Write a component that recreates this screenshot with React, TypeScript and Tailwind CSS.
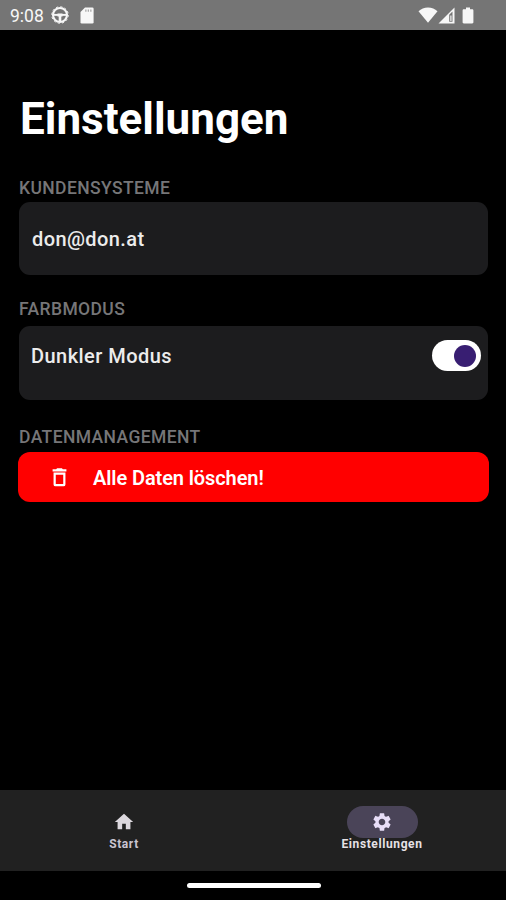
import type { ReactNode } from 'react'
import { MdHome, MdSettings } from 'react-icons/md'

function WheelIcon() {
  return (
    <svg viewBox="0 0 18 18" className="w-[18px] h-[18px]" fill="none" stroke="currentColor">
      <circle cx="9" cy="9" r="7" strokeWidth="2.1" />
      <circle cx="9" cy="9" r="8.3" strokeWidth=".9" strokeDasharray="2.2 2.15" />
      <path d="M2.500 8.900h13" strokeWidth="1.900" />
      <path d="M6.500 7.400h5v3h-1.200v4.600H7.700v-4.600H6.500z" fill="currentColor" stroke="none" />
    </svg>
  )
}

function TrashIcon() {
  return (
    <svg viewBox="0 0 24 24" className="size-[23px]" fill="currentColor">
      <path
        fillRule="evenodd"
        d="M4.800 3.500h3.700l1-1.100h5l1 1.100h3.700v2.300H4.800zM5.800 6.800h12.400v12.400a2 2 0 0 1-2 2H7.800a2 2 0 0 1-2-2zM8.100 9.100v9.800h7.800V9.100z"
      />
    </svg>
  )
}

function StatusBar() {
  return (
    <div className="h-[30px] bg-[#757575] flex items-center justify-between pl-[10px] pr-[32px] text-[#f7f7f7]">
      <div className="flex items-center">
        <span className="w-[41px] text-[17.5px] leading-[30px] pt-[2px]">9:08</span>
        <WheelIcon />
        <svg viewBox="0 0 14 17" className="w-[14px] h-[17px] ml-[11px]" fill="currentColor">
          <path d="M5 .5h7.300A1.300 1.300 0 0 1 13.600 1.800v13.400a1.300 1.300 0 0 1-1.300 1.300H1.800A1.300 1.300 0 0 1 .5 15.200V5z" />
          <path d="M5.200 2.500h1.300v2.300H5.200zM7.700 2.500H9v2.300H7.700zM10.200 2.500h1.300v2.300h-1.300z" fill="#aaa" />
        </svg>
      </div>
      <div className="flex items-center">
        <svg viewBox="0 0 20 16" className="w-5 h-4" fill="currentColor">
          <path d="M10 15.800.5 4.300C3 1.800 6.200.5 10 .5s7 1.300 9.500 3.800z" />
        </svg>
        <svg viewBox="0 0 17 17" className="w-[17px] h-[17px]" fill="currentColor">
          <path fillRule="evenodd" d="M.5 16.500 16.500.5v16zM11.200 7.800v6.900h3.300V4.500z" />
          <path d="M12.300 8.500h1.200v5.500h-1.200z" />
        </svg>
        <svg viewBox="0 0 12 17" className="w-3 h-[17px] ml-[7px]" fill="currentColor">
          <path d="M4 .5h4v1.700h2.200c.7 0 1.200.5 1.200 1.200v11.900c0 .7-.5 1.200-1.200 1.200H1.800c-.7 0-1.200-.5-1.200-1.200V3.400c0-.7.5-1.200 1.200-1.200H4z" />
        </svg>
      </div>
    </div>
  )
}

function SectionLabel({ children }: { children: ReactNode }) {
  return <h2 className="h-6 text-[17.5px] leading-6 tracking-[0.4px] font-medium text-[#767678]">{children}</h2>
}

function NavItem({ icon, label, active }: { icon: ReactNode; label: string; active?: boolean }) {
  return (
    <div className="flex-1 flex flex-col items-center pt-4">
      <div
        className={`w-[71px] h-8 rounded-full flex items-center justify-center text-[22px] ${
          active ? 'bg-[#4a4458] text-[#e8def8]' : 'text-[#dcd8de]'
        }`}
      >
        {icon}
      </div>
      <span className={`text-[12px] leading-3 font-bold tracking-[0.6px] ${active ? 'text-[#e6e1e5]' : 'text-[#cac4d0]'}`}>
        {label}
      </span>
    </div>
  )
}

export default function App() {
  return (
    <div className="w-[506px] h-[900px] bg-black flex flex-col overflow-hidden font-['Roboto',sans-serif]">
      <StatusBar />

      <main className="flex-1 pl-[19px] pr-[18px] pt-[63px]">
        <h1 className="h-[51px] pl-px text-[44px] leading-[52px] font-bold text-white">Einstellungen</h1>

        <section className="mt-8">
          <SectionLabel>KUNDENSYSTEME</SectionLabel>
          <div className="mt-[2px] h-[73px] rounded-[11px] bg-[#1c1c1e] flex items-center pl-[13px] text-[20px] font-medium tracking-[0.4px] text-[#ececec]">
            <span className="pt-px">don@don.at</span>
          </div>
        </section>

        <section className="mt-[22px]">
          <SectionLabel>FARBMODUS</SectionLabel>
          <div className="mt-[5px] h-[74px] rounded-[11px] bg-[#1c1c1e] flex items-start justify-between pl-3 pr-[7px] pt-[14px] text-[20px] font-medium tracking-[0.45px] text-[#ececec]">
            <span className="leading-8">Dunkler Modus</span>
            <div className="w-[49px] h-[31px] rounded-full bg-white flex items-center justify-end pr-[5px]">
              <div className="size-[22px] rounded-full bg-[#381e72]" />
            </div>
          </div>
        </section>

        <section className="mt-[25px]">
          <SectionLabel>DATENMANAGEMENT</SectionLabel>
          <button className="mt-[3px] -mx-px w-[471px] h-[50px] rounded-[12px] bg-[#ff0000] flex items-center pl-[30px] text-white">
            <TrashIcon />
            <span className="ml-[22px] pt-[2px] text-[20px] font-semibold tracking-[-0.1px]">Alle Daten löschen!</span>
          </button>
        </section>
      </main>

      <nav className="h-[81px] bg-[#212121] flex gap-[10px]">
        <NavItem icon={<MdHome />} label="Start" />
        <NavItem icon={<MdSettings />} label="Einstellungen" active />
      </nav>

      <div className="h-[29px] flex justify-center pt-3 pl-px">
        <div className="w-[134px] h-[5px] rounded-full bg-white" />
      </div>
    </div>
  )
}
